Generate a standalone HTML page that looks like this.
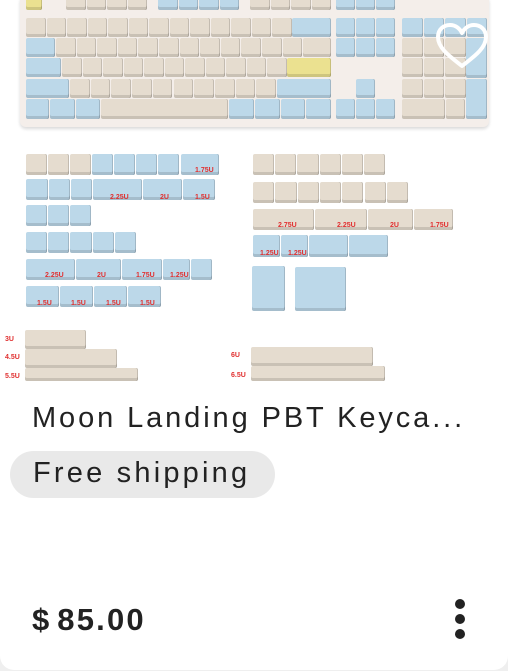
<!DOCTYPE html>
<html><head><meta charset="utf-8"><style>
*{margin:0;padding:0;box-sizing:border-box}
body{width:508px;height:671px;background:#efefef;position:relative;overflow:hidden;font-family:"Liberation Sans",sans-serif}
.card{position:absolute;left:0;top:-20px;width:508px;height:690px;background:#fff;border-radius:14px;overflow:hidden}
#img{position:absolute;left:0;top:0;width:508px;height:382px}
.k{position:absolute;border-radius:2px;box-shadow:inset 0 -3px 0 rgba(0,0,0,.12),inset -1px 0 0 rgba(0,0,0,.15)}
.b{background:#e5dccf}.u{background:#bcd8e9}.y{background:#ebe190}
.r{position:absolute;color:#e03030;font-size:7px;font-weight:bold}
.t{position:absolute;left:32px;top:402px;font-size:29px;color:#222;letter-spacing:2.9px;white-space:nowrap}
.badge{position:absolute;left:10px;top:451px;width:265px;height:47px;background:#e9e9e9;border-radius:24px;font-size:29px;color:#222;padding:6px 0 0 23px;letter-spacing:3.2px;white-space:nowrap}
.p{position:absolute;left:32px;top:602px;font-size:31px;font-weight:bold;color:#222;letter-spacing:2.2px;word-spacing:-5px}
.d{position:absolute;left:455px;width:10px;height:10px;border-radius:50%;background:#222}
</style></head><body>
<div class="card"></div>
<div id="img">
<div style="position:absolute;left:20px;top:-5px;width:469px;height:132px;background:#f4eeea;border-radius:6px;box-shadow:0 2px 3px rgba(0,0,0,.15)"></div>
</div>
<div class="t">Moon Landing PBT Keyca...</div>
<div class="badge">Free shipping</div>
<div class="p">$ 85.00</div>
<div class="d" style="top:599px"></div><div class="d" style="top:614px"></div><div class="d" style="top:629px"></div>
<script>
var I=document.getElementById('img');
function k(c,x,y,w,h){var d=document.createElement('div');d.className='k '+c;d.style.cssText='left:'+x+'px;top:'+y+'px;width:'+(w-1)+'px;height:'+(h-1)+'px';I.appendChild(d);}
function row(c,x,y,n,w,h){for(var i=0;i<n;i++)k(c,x+i*w,y,w,h);}
k('y',26,-3,17,14);row('b',66,-3,4,20.5,14);row('u',158,-3,4,20.5,14);row('b',250,-3,4,20.5,14);row('u',336,-3,3,20,14);
row('b',26,18,13,20.5,20);k('u',292,18,40,20);row('u',336,18,3,20,20);row('u',402,18,4,21.5,20);
k('u',26,38,30,20);row('b',56,38,12,20.6,20);k('b',303,38,29,20);row('u',336,38,3,20,20);row('b',402,38,3,21.5,20);k('u',466,38,22,41);
k('u',26,58,36,20);row('b',62,58,11,20.5,20);k('y',287,58,45,20);row('b',402,58,3,21.5,20);
k('u',26,79,44,20);row('b',70,79,10,20.7,20);k('u',277,79,55,20);k('u',356,79,20,20);row('b',402,79,3,21.5,20);k('u',466,79,22,41);
k('u',26,99,24,21);k('u',50,99,26,21);k('u',76,99,25,21);k('b',101,99,128,21);row('u',229,99,4,25.8,21);row('u',336,99,3,20,21);k('b',402,99,44,21);k('b',446,99,20,21);
row('b',26,154,3,22,22);row('u',92,154,4,22,22);k('u',181,154,39,22);
k('u',26,179,23,22);row('u',49,179,2,22,22);k('u',93,179,50,22);k('u',143,179,40,22);k('u',183,179,33,22);
row('u',26,205,3,22,22);row('u',26,232,5,22.2,22);
k('u',26,259,50,22);k('u',76,259,46,22);k('u',122,259,41,22);k('u',163,259,28,22);k('u',191,259,22,22);
k('u',26,286,34,22);k('u',60,286,34,22);k('u',94,286,34,22);k('u',128,286,34,22);
row('b',253,154,6,22.2,22);row('b',253,182,7,22.3,22);
k('b',253,209,62,22);k('b',315,209,53,22);k('b',368,209,46,22);k('b',414,209,40,22);
k('u',253,235,28,23);k('u',281,235,28,23);k('u',309,235,40,23);k('u',349,235,40,23);
k('u',252,266,34,46);k('u',295,267,52,45);
k('b',25,330,62,20);k('b',25,349,93,20);k('b',25,368,114,14);k('b',251,347,123,20);k('b',251,366,135,16);
function r(t,x,y){var d=document.createElement('div');d.className='r';d.textContent=t;d.style.left=x+'px';d.style.top=y+'px';I.appendChild(d);}
r('3U',5,336);r('4.5U',5,354);r('5.5U',5,373);r('6U',231,352);r('6.5U',231,372);
r('1.75U',195,167);r('2.25U',110,194);r('2U',160,194);r('1.5U',195,194);r('2.75U',278,222);r('2.25U',337,222);r('2U',390,222);r('1.75U',430,222);
r('1.25U',260,250);r('1.25U',288,250);r('2.25U',45,272);r('2U',97,272);r('1.75U',136,272);r('1.25U',170,272);
r('1.5U',37,300);r('1.5U',71,300);r('1.5U',106,300);r('1.5U',140,300);
</script>
<svg style="position:absolute;left:434px;top:22px" width="56" height="48" viewBox="0 0 56 48"><path d="M28 44 C18 36 4 27 4 15 C4 7 10 3 16 3 C22 3 26 7 28 11 C30 7 34 3 40 3 C46 3 52 7 52 15 C52 27 38 36 28 44Z" fill="none" stroke="#fff" stroke-width="4" stroke-linejoin="round"/></svg>
</body></html>
